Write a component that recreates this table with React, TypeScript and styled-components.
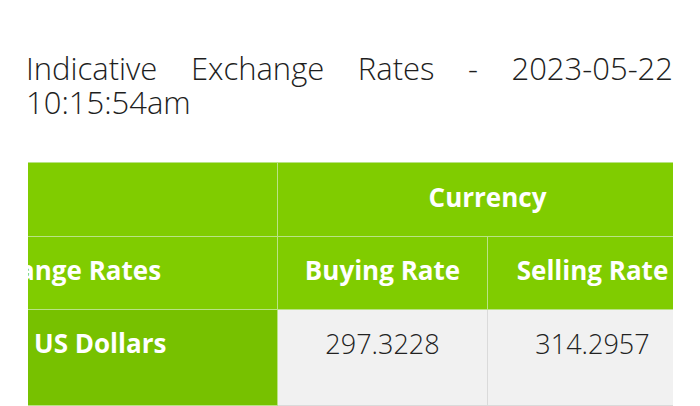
import React, { useLayoutEffect, useRef } from "react";
import styled, { createGlobalStyle } from "styled-components";

const Global = createGlobalStyle`
  html, body { margin: 0; padding: 0; background: #ffffff; }
  body { font-family: "Open Sans", "Liberation Sans", sans-serif; }
`;

const Page = styled.main`
  width: 700px;
  height: 406px;
  overflow: hidden;
  box-sizing: border-box;
  padding: 51px 27px 0 26px;
`;

const Title = styled.h2`
  margin: 0;
  font-weight: 300;
  font-size: 31px;
  line-height: 34px;
  text-align: justify;
  color: #1e1e1e;
`;

const Scroller = styled.div`
  margin: 43px 0 0 2px;
  overflow-x: auto;
  scrollbar-width: none;
  &::-webkit-scrollbar { display: none; }
`;

const Table = styled.table`
  border-collapse: collapse;
  table-layout: fixed;
  width: 740px;
`;

const Col = styled.col<{ $w: number }>`
  width: ${(p) => p.$w}px;
`;

const Head = styled.th<{ $h: number; $align?: string; $pad?: number }>`
  height: ${(p) => p.$h}px;
  box-sizing: border-box;
  background: #80cc00;
  color: #ffffff;
  font-weight: 700;
  font-size: 26px;
  text-align: ${(p) => p.$align ?? "center"};
  padding: 0 0 6px ${(p) => p.$pad ?? 0}px;
  white-space: nowrap;
  border: 1px solid #b9e385;
`;

const RowHead = styled.td`
  height: 96px;
  box-sizing: border-box;
  vertical-align: top;
  padding: 15px 0 0 76px;
  background: #77c100;
  color: #ffffff;
  font-weight: 700;
  font-size: 26px;
  text-align: left;
  white-space: nowrap;
  border: 1px solid #b9e385;
`;

const Value = styled.td`
  box-sizing: border-box;
  vertical-align: top;
  padding-top: 15px;
  background: #f1f1f1;
  color: #222222;
  font-weight: 300;
  font-size: 27px;
  text-align: center;
  border: 1px solid #dadada;
`;

export default function App() {
  const ref = useRef<HTMLDivElement>(null);
  useLayoutEffect(() => {
    if (ref.current) ref.current.scrollLeft = 71;
  }, []);
  return (
    <>
      <Global />
      <Page>
        <Title>Indicative Exchange Rates - 2023-05-22 10:15:54am</Title>
        <Scroller ref={ref}>
          <Table>
            <colgroup>
              <Col $w={320} />
              <Col $w={210} />
              <Col $w={210} />
            </colgroup>
            <thead>
              <tr>
                <Head $h={74} />
                <Head $h={74} colSpan={2}>Currency</Head>
              </tr>
              <tr>
                <Head $h={73} $align="left" $pad={1}>Exchange Rates</Head>
                <Head $h={73}>Buying Rate</Head>
                <Head $h={73}>Selling Rate</Head>
              </tr>
            </thead>
            <tbody>
              <tr>
                <RowHead>US Dollars</RowHead>
                <Value>297.3228</Value>
                <Value>314.2957</Value>
              </tr>
            </tbody>
          </Table>
        </Scroller>
      </Page>
    </>
  );
}
